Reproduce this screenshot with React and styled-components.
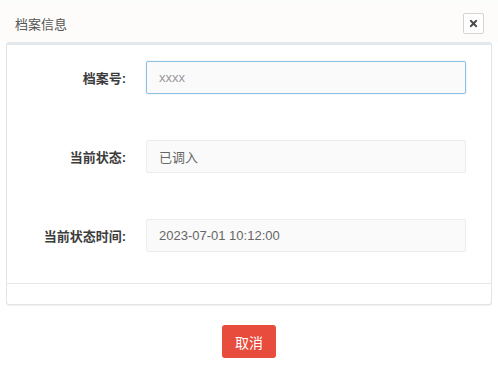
import styled, { createGlobalStyle } from "styled-components";
import { FaTimes } from "react-icons/fa";

const GlobalStyle = createGlobalStyle`
	body {
		margin: 0;
		background: #fff;
		font-family: "Liberation Sans", "Noto Sans CJK SC", sans-serif;
	}
`;

const fields = [
	{ label: "档案号:", value: "xxxx", placeholder: true, focused: true },
	{ label: "当前状态:", value: "已调入" },
	{ label: "当前状态时间:", value: "2023-07-01 10:12:00" },
];

const App = () => {
	return (
		<Dialog>
			<GlobalStyle />
			<Header>
				<Title>档案信息</Title>
				<CloseButton>
					<FaTimes />
				</CloseButton>
			</Header>
			<Panel>
				<PanelBody>
					{fields.map((f) => (
						<Row key={f.label}>
							<Label>{f.label}</Label>
							<Input $focused={f.focused} $placeholder={f.placeholder}>
								{f.value}
							</Input>
						</Row>
					))}
				</PanelBody>
				<PanelFooter />
			</Panel>
			<Actions>
				<CancelButton>取消</CancelButton>
			</Actions>
		</Dialog>
	);
};

export default App;

const Dialog = styled.div`
	width: 498px;
	height: 368px;
	background: #fff;
	border-top: 3px solid #fbfcfc;
	box-sizing: border-box;
`;

const Header = styled.div`
	display: flex;
	align-items: center;
	justify-content: space-between;
	height: 39px;
	padding: 0 14px 0 15px;
	background: #fdfcfa;
`;

const Title = styled.span`
	font-size: 13px;
	color: #555;
	padding-top: 2px;
`;

const CloseButton = styled.span`
	display: flex;
	align-items: center;
	justify-content: center;
	width: 19px;
	height: 19px;
	border: 1px solid #d4d4d4;
	border-radius: 2px;
	background: #fff;
	color: #4a4a4a;
	font-size: 11px;
	margin-top: 2px;
`;

const Panel = styled.div`
	margin: 0 6px;
	border: 1px solid #e4e4e4;
	border-top: 3px solid #e3e8ec;
	border-radius: 3px;
	box-shadow: 0 1px 1px rgba(0, 0, 0, 0.06);
	background: #fff;
`;

const PanelBody = styled.div`
	display: flex;
	flex-direction: column;
	gap: 46px;
	padding: 16px 25px 31px 0;
	border-bottom: 1px solid #e6e6e6;
`;

const PanelFooter = styled.div`
	height: 20px;
`;

const Row = styled.div`
	display: grid;
	grid-template-columns: 119px 1fr;
	column-gap: 20px;
	align-items: center;
`;

const Label = styled.label`
	text-align: right;
	font-size: 13px;
	font-weight: bold;
	color: #3c3c3c;
`;

const Input = styled.div`
	height: 33px;
	box-sizing: border-box;
	display: flex;
	align-items: center;
	padding: 0 12px;
	font-size: 13px;
	color: ${(p) => (p.$placeholder ? "#999" : "#666")};
	background: #fafafa;
	border: 1px solid ${(p) => (p.$focused ? "#8fbfe3" : "#ececec")};
	border-radius: 2px;
	box-shadow: ${(p) => (p.$focused ? "0 0 2px rgba(102, 175, 233, 0.35)" : "none")};
`;

const Actions = styled.div`
	display: flex;
	justify-content: center;
	padding-top: 20px;
`;

const CancelButton = styled.button`
	width: 54px;
	height: 33px;
	border: none;
	border-radius: 3px;
	background: #e74c3c;
	color: #fff;
	font-family: "Liberation Sans", "Noto Sans CJK SC", sans-serif;
	font-size: 14px;
	padding: 0;
`;
